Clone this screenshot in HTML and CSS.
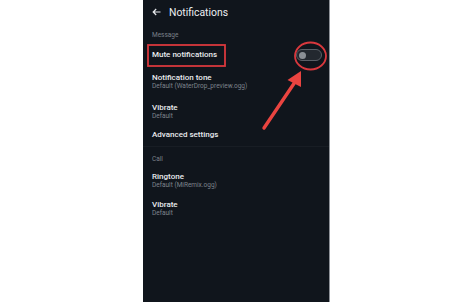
FILE: index.html
```html
<!DOCTYPE html>
<html>
<head>
<meta charset="utf-8">
<link rel="stylesheet" href="styles.css">
</head>
<body>
<div class="page">
  <div class="phone">
    <div class="header">
      <svg class="back" width="9" height="8" viewBox="0 0 9 8"><path d="M8.5 4H1.2M4.2 1L1.2 4l3 3" fill="none" stroke="#e8eaed" stroke-width="1.2"/></svg>
      <span class="title">Notifications</span>
    </div>
    <div class="label label-msg">Message</div>
    <div class="row mute">
      <span class="name">Mute notifications</span>
      <span class="toggle"><span class="knob"></span></span>
    </div>
    <div class="row two">
      <span class="name">Notification tone</span>
      <span class="sub">Default (WaterDrop_preview.ogg)</span>
    </div>
    <div class="row two">
      <span class="name">Vibrate</span>
      <span class="sub">Default</span>
    </div>
    <div class="row adv">
      <span class="name">Advanced settings</span>
    </div>
    <div class="divider"></div>
    <div class="label label-call">Call</div>
    <div class="row two tight">
      <span class="name">Ringtone</span>
      <span class="sub">Default (MiRemix.ogg)</span>
    </div>
    <div class="row two tight">
      <span class="name">Vibrate</span>
      <span class="sub">Default</span>
    </div>
    <svg class="annot" width="187" height="302" viewBox="143 0 187 302">
      <rect x="148" y="45" width="77" height="21" fill="none" stroke="#d9383d" stroke-width="1.8"/>
      <ellipse cx="310.5" cy="56" rx="15.5" ry="13.5" fill="none" stroke="#d9383d" stroke-width="1.8"/>
      <line x1="264" y1="128" x2="295" y2="82" stroke="#ea4440" stroke-width="3.4" stroke-linecap="round"/>
      <polygon points="301,71 287.5,80 301,87" fill="#ea4440"/>
    </svg>
  </div>
</div>
</body>
</html>
```
FILE: styles.css
```css
html, body {
  margin: 0;
  padding: 0;
  background: #ffffff;
}
.page {
  width: 474px;
  height: 302px;
  display: flex;
  padding-left: 143px;
  box-sizing: border-box;
}
.phone {
  position: relative;
  width: 187px;
  height: 302px;
  background: #10151c;
  border-right: 1px solid #8e9298;
  box-sizing: border-box;
  font-family: Roboto, "Noto Sans", sans-serif;
  display: flex;
  flex-direction: column;
  padding-left: 9px;
}
.header {
  height: 24px;
  display: flex;
  align-items: center;
}
.back {
  display: block;
  margin-right: 8px;
}
.title {
  color: #eceef1;
  font-size: 10.4px;
}
.label {
  color: #7b8089;
  font-size: 6.5px;
  line-height: 8px;
}
.label-msg {
  margin-top: 7px;
  margin-bottom: 5px;
}
.row {
  display: flex;
  flex-direction: column;
}
.name {
  color: #e9ebee;
  font-size: 8px;
  font-weight: 500;
  line-height: 8px;
}
.sub {
  color: #7e848c;
  font-size: 6.5px;
  line-height: 9px;
}
.mute {
  height: 22px;
  flex-direction: row;
  align-items: center;
  justify-content: space-between;
  padding-right: 7px;
  margin-bottom: 4px;
}
.toggle {
  width: 22px;
  height: 10px;
  border: 1px solid #5a5f66;
  border-radius: 6px;
  background: #23282f;
  display: flex;
  align-items: center;
  padding-left: 2px;
}
.knob {
  width: 7px;
  height: 7px;
  border-radius: 50%;
  background: #8a8f95;
}
.two {
  height: 30px;
  padding-top: 4px;
  box-sizing: border-box;
}
.two.tight {
  height: 28px;
}
.adv {
  height: 16px;
  padding-top: 1px;
  box-sizing: border-box;
}
.divider {
  height: 1px;
  margin-left: -9px;
  background: #181d24;
}
.label-call {
  margin-top: 8px;
  margin-bottom: 6px;
}
.annot {
  position: absolute;
  left: 0;
  top: 0;
  pointer-events: none;
}
```
